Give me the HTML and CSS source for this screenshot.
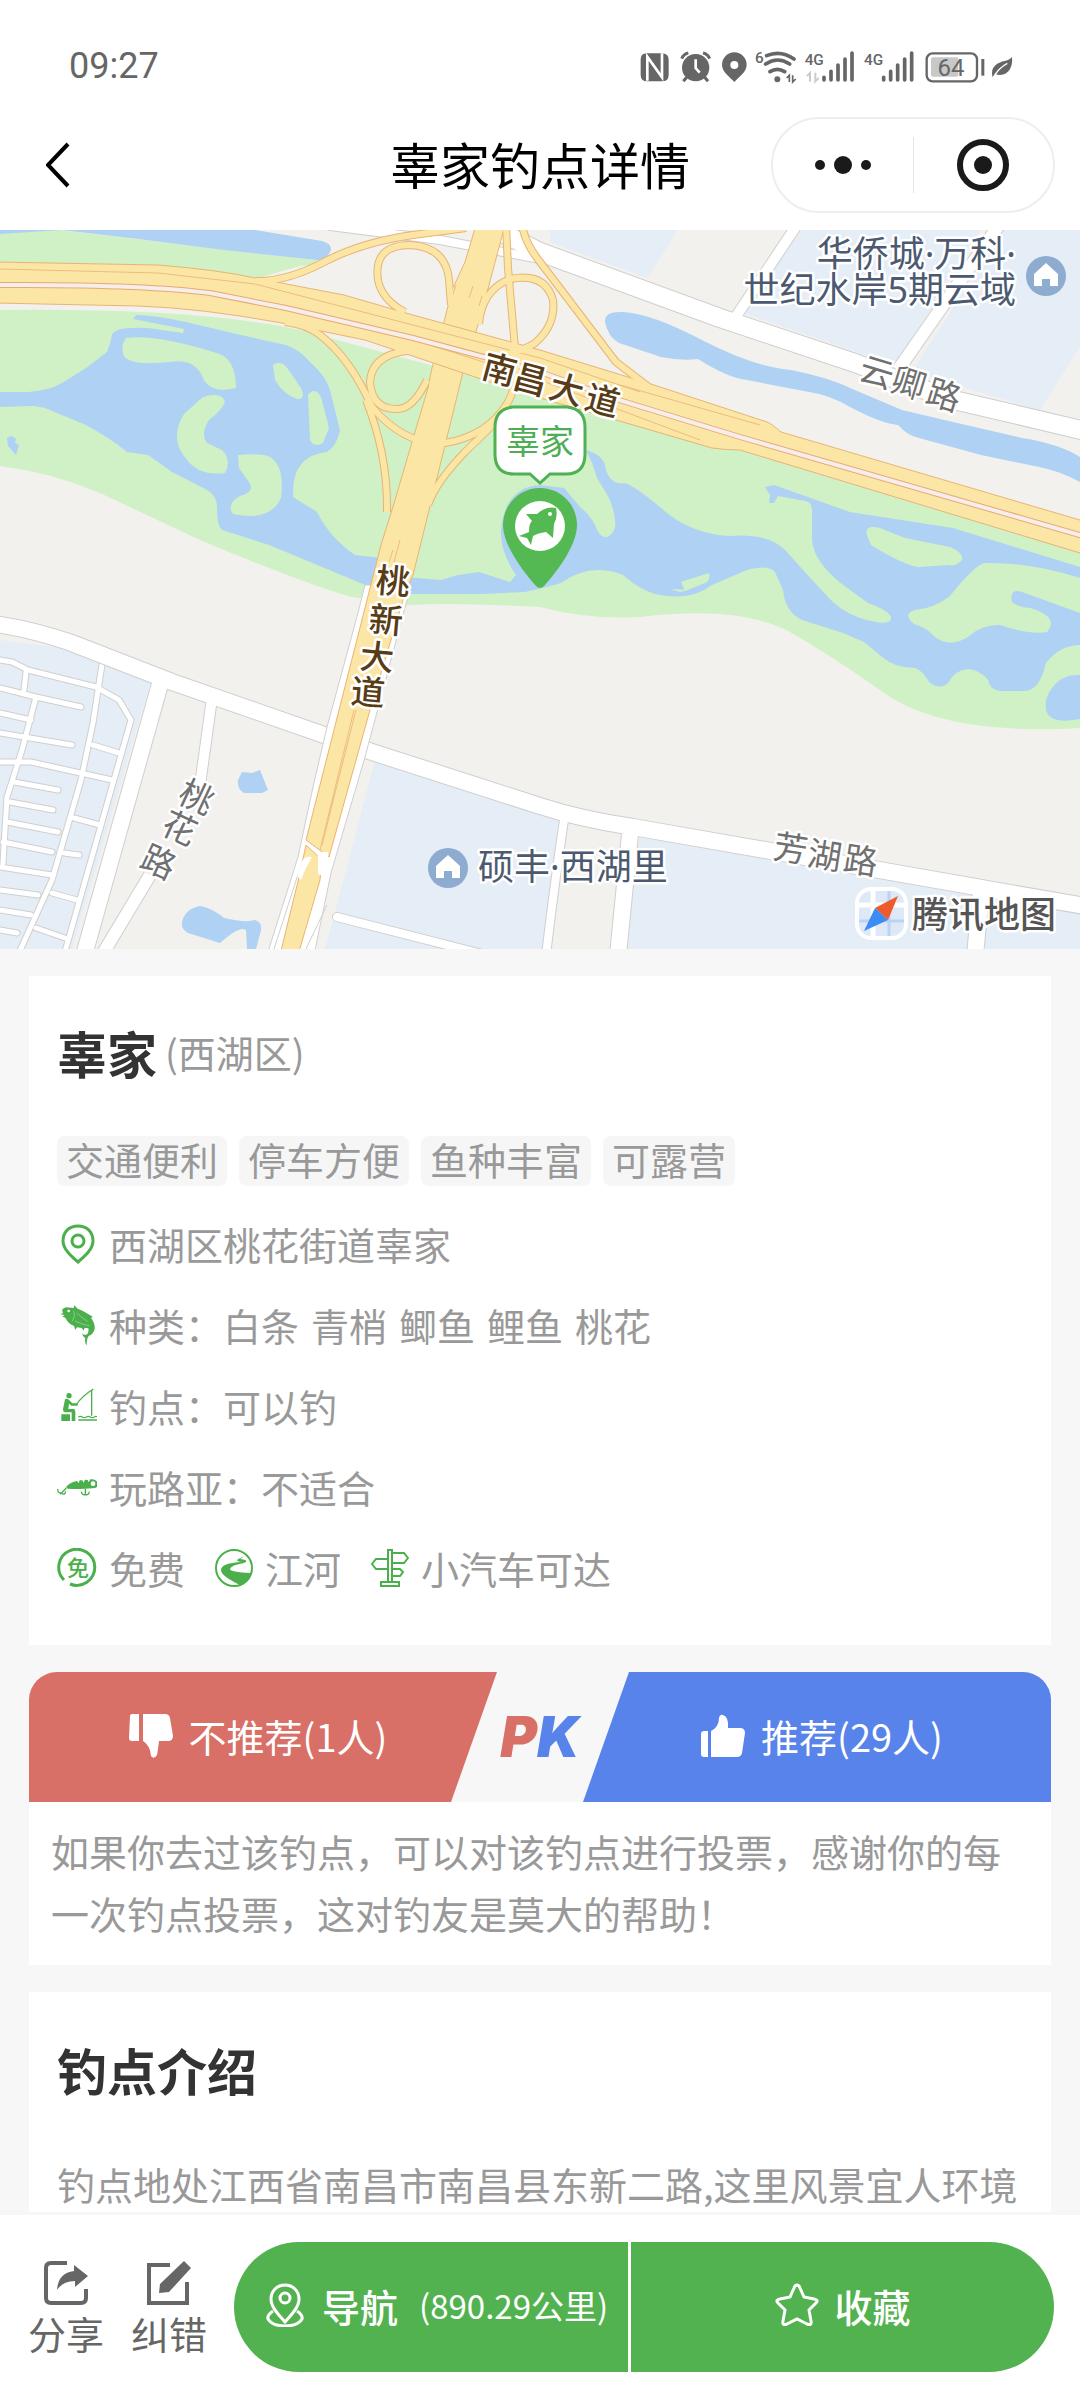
FILE: index.html
```html
<!DOCTYPE html>
<html lang="zh-CN">
<head>
    <meta charset="UTF-8">
    <meta name="viewport" content="width=device-width, initial-scale=1.0">
    <title>辜家钓点详情</title>
    <link rel="stylesheet" href="styles.css">
</head>
<body>
    <header class="header">
        <div class="status-bar">
            <span class="status-time">09:27</span>
            <svg class="status-icons" viewBox="30 50 1128 108" aria-hidden="true">
                <!-- nfc -->
                <path d="M50 66h46q20 0 20 20v44q0 20-20 20H52q-20 0-20-20V84q0-18 18-18z"/>
                <path class="status-cut" d="M52 148V76l44 62V66"/>
                <!-- alarm -->
                <circle cx="197" cy="109" r="41"/>
                <path class="status-line" d="M155 82q6-14 20-17M239 82q-6-14-20-17M170 138l-10 12M224 138l10 12"/>
                <path class="status-cut" d="M197 84v26l12 14"/>
                <!-- location -->
                <path fill-rule="evenodd" d="M313 63a37 37 0 0 1 37 37c0 22-22 35-37 52-15-17-37-30-37-52a37 37 0 0 1 37-37zm0 26a12 12 0 1 0 0 24 12 12 0 0 0 0-24z"/>
                <!-- wifi -->
                <text class="status-small" x="375" y="96">6</text>
                <path class="status-wave" d="M410 73q42-18 82 10M407 98q36-24 72 0M420 121q22-14 44 0"/>
                <circle cx="442" cy="144" r="9"/>
                <path class="status-thin" d="M470 140l8-8v20M488 132v20l9-9"/>
                <!-- signal 1 -->
                <text class="status-small" x="524" y="101">4G</text>
                <path class="status-faint" d="M531 134l9-9v26M556 124v26l10-10"/>
                <path class="status-bars" d="M582 138v8M603 120v26M624 101v45M645 83v63M666 65v81"/>
                <!-- signal 2 -->
                <text class="status-small" x="702" y="101">4G</text>
                <path class="status-bars" d="M761 138v8M782 120v26M803 101v45M824 83v63M845 65v81"/>
                <!-- battery -->
                <rect class="status-level" x="903" y="78" width="82" height="58" rx="6"/>
                <rect class="status-frame" x="890" y="66" width="151" height="84" rx="18"/>
                <text class="status-percent" x="963" y="134">64</text>
                <rect x="1054" y="83" width="9" height="50"/>
                <!-- leaf -->
                <path d="M1146 77c4 32-14 61-48 52l-10 9c-6-22 2-36 20-44 16-7 28-5 38-17z"/>
                <path class="status-vein" d="M1090 138q16-28 42-42"/>
            </svg>
        </div>
        <nav class="nav-bar">
            <button class="back-button" aria-label="返回">
                <svg viewBox="0 0 26 46"><path d="M22 2L2 23l20 21"/></svg>
            </button>
            <h1 class="nav-title">辜家钓点详情</h1>
            <div class="capsule">
                <button class="capsule-button" aria-label="更多">
                    <svg viewBox="0 0 56 56"><circle cx="5" cy="28" r="5"/><circle cx="28" cy="28" r="9"/><circle cx="51" cy="28" r="5"/></svg>
                </button>
                <button class="capsule-button" aria-label="关闭">
                    <svg viewBox="0 0 56 56"><circle class="ring" cx="28" cy="28" r="23"/><circle cx="28" cy="28" r="9"/></svg>
                </button>
            </div>
        </nav>
    </header>

    <main>
        <svg class="map" viewBox="0 230 1080 719" role="img" aria-label="钓点地图">
            <defs>
                <g id="streets">
                    <path d="M0 660L12 662L28 670L96 687L119 700L131 720L64 955"/>
                    <path d="M103 658L93 723L81 780L52 880L18 955"/>
                    <path d="M26 672L24 690M0 688L36 697L81 707M36 697L22 750L7 797L3 863"/>
                    <path d="M0 713L31 720M0 733L72 745M0 762L31 762L112 780"/>
                    <path d="M14 782L58 790M10 802L53 810M7 822L58 832M3 842L52 852M0 867L52 875M0 890L38 895M0 910L31 915M0 930L17 933"/>
                    <path d="M93 745L119 753M74 818L100 825M52 893L77 900M36 928L65 938M64 853L79 855"/>
                </g>
                <g id="roads">
                    <path class="w8" d="M330 226L440 240L540 259"/>
                    <path class="w18" d="M500 232L540 252L720 318L858 364L910 385L958 401L1090 432"/>
                    <path class="w10" d="M797 225L735 318"/>
                    <path class="w12" d="M999 225L898 370"/>
                    <path class="w16" d="M-5 624Q30 629 69 642L172 682L327 736L372 752L540 806Q580 819 633 827L771 851L1090 907"/>
                    <path class="w16" d="M160 684L84 955"/>
                    <path class="w10" d="M212 698L200 785"/>
                    <path class="w12" d="M150 875L102 955"/>
                    <path class="w8" d="M564 820Q555 880 546 955"/>
                    <path class="w16" d="M630 834L618 955"/>
                    <path class="w16" d="M981 893L975 955"/>
                    <path class="w8" d="M337 917L490 956"/>
                </g>
                <g id="ramps">
                    <path d="M255 281Q286 282 324 262T413 235L466 228"/>
                    <path d="M405 312Q382 300 378 280Q373 245 410 245Q446 247 449 280L451 305"/>
                    <path d="M506 225L508 268L515 348Q518 385 508 402Q488 436 445 443Q405 446 372 407Q350 358 320 335Q308 325 285 322"/>
                    <path d="M522 225Q525 242 537 258L578 312L616 362L650 388"/>
                    <path d="M479 324Q482 290 510 279Q545 272 553 300Q556 325 535 343Q525 350 510 352"/>
                    <path d="M422 350Q372 350 370 382Q372 410 398 409Q414 408 427 380"/>
                    <path d="M366 400Q388 455 387 512"/>
                    <path d="M498 420L465 452Q436 482 428 505"/>
                </g>
            </defs>

            <rect class="land" x="0" y="230" width="1080" height="719"/>

            <!-- residential blocks -->
            <path class="block" d="M550 230H678L647 278L550 242Z"/>
            <path class="block" d="M802 230H981L895 365L743 313Z"/>
            <path class="block" d="M1003 230H1080V347L1040 410L912 372Z"/>
            <path class="block" d="M0 640L60 648L151 680L72 949H0Z"/>
            <path class="block" d="M375 760L558 818L545 949H325L337 905Z"/>
            <path class="block" d="M639 834L1080 912V949H627Z"/>

            <!-- park -->
            <path class="park" d="M0 230H60L330 262L300 266L250 280L0 270Z"/>
            <path class="park" d="M0 310Q200 308 300 330L560 400L740 450L1080 552V728Q940 736 880 690Q830 655 790 632Q740 605 640 617Q590 620 540 607Q450 602 408 605L352 597Q310 586 200 540L100 493Q50 472 0 466Z"/>

            <!-- water -->
            <path class="water" d="M0 230H255L322 241Q332 244 331 250L325 261L224 250L138 239L62 230L0 234Z"/>
            <path class="water" d="M605 322Q604 311 623 312Q650 313 702 340T791 370Q830 378 850 388L902 410L953 422L1022 438Q1060 444 1080 457V482Q1060 471 1039 467L981 455L919 438Q908 436 898 425Q880 423 850 407Q830 395 809 392L747 380Q728 378 698 359Q680 361 661 357L619 343Q608 337 605 322Z"/>
            <path class="water" d="M0 392H28Q48 391 62 383L86 368L107 352Q110 345 112 335Q114 326 148 328L183 333L184 329L133 319L136 315Q160 316 186 322L241 335L286 345Q300 350 310 362Q326 376 330 390L340 430Q337 446 327 452Q308 454 300 466Q293 474 293 497L317 512Q330 538 355 555L382 558V592L310 562L269 545L222 530Q217 526 217 510Q218 496 207 490L172 472L148 455L127 452Q110 438 86 425L45 408L34 406L0 407Z"/>
            <path class="water" d="M405 577L441 580L458 575L479 572L510 582L516 575Q500 552 501 530Q505 487 540 485L564 488L581 508Q590 515 595 525Q600 539 607 537Q617 532 615 520Q613 502 603 488L597 478L592 463L586 450Q605 455 606 470Q611 485 624 483Q634 485 661 508Q690 534 730 536Q768 533 785 550L826 595Q840 611 860 618Q892 628 891 617Q888 610 868 603L850 590Q814 565 812 540V510Q812 502 805 501L778 496L774 503L769 503L770 495L765 487L774 485L850 512L953 528L1080 567V645Q1060 645 1046 663Q1040 690 1025 691L1000 691Q990 690 988 680Q980 670 968 669Q955 670 949 682Q940 691 929 682Q922 670 915 668Q895 668 882 657L864 642L843 633L802 620Q785 612 783 590L775 572Q768 564 747 570L712 585Q690 602 655 594Q640 590 623 575Q590 562 561 583L547 587L525 592L482 594L405 594Z"/>
            <path class="water" d="M7 438Q12 434 16 439L15 443L19 445L16 455L8 446ZM238 780L242 772L252 773L260 770L268 790L262 793L244 793Q237 789 238 780ZM182 923Q184 909 200 906Q212 908 224 918Q245 923 255 920Q264 923 260 934L256 949H247L246 930Q240 925 220 943L188 933Q181 929 182 923Z"/>
            <path class="park" d="M126 338Q155 334 213 352Q236 356 236 388Q210 394 203 378Q195 358 170 362Q130 366 124 356Q120 346 126 338ZM203 397Q222 391 225 402Q222 410 209 420Q200 434 207 443L222 450Q232 460 225 473Q200 476 188 461Q168 440 184 414ZM238 455Q262 453 270 457Q285 466 281 498Q270 522 233 514Q226 504 240 496Q256 492 249 482L239 468ZM273 365Q281 359 288 369L301 388Q306 400 297 399Q284 395 275 380ZM308 395Q315 386 321 397L329 428L323 443Q314 448 310 440Z"/>
            <path class="park" d="M867 535Q864 524 880 528L905 538L950 547Q964 553 962 560Q956 567 949 565L919 567Q905 566 871 545ZM984 563Q1030 562 1080 578V613L1022 592Q1009 588 1012 602Q1020 608 1030 608Q1060 617 1047 632Q1030 635 1000 625Q982 624 968 637Q950 648 935 637Q926 627 914 624Q902 614 915 610Q935 608 950 596Q974 566 984 563ZM681 582L709 573Q711 580 705 583L685 591ZM671 589L688 590L680 592Z"/>
            <path class="water" d="M1080 675Q1062 674 1052 688Q1044 698 1046 710Q1050 725 1080 719Z"/>

            <!-- white streets and roads, outline first -->
            <use href="#streets" class="street-edge"/>
            <use href="#streets" class="street"/>
            <use href="#roads" class="road-edge"/>
            <use href="#roads" class="road"/>
            <path class="white-road" d="M365 585L358 613L327 727L313 787L298 857L267 955H314L331 873L365 757L411 585Z"/>
            <path class="hair" d="M302 862L274 949M310 875L288 949M327 905L306 949"/>

            <!-- ramps and the two main roads -->
            <use href="#ramps" class="ramp-edge"/>
            <path class="main-road" d="M476 225L465 262L452 290L444 322L432 368L428 388L392 510L381 545L367 600L306 840L329 857L370 710L406 590L413 575L434 490L463 372L479 322L493 270L505 225Z"/>
            <path class="main-road" d="M300 873L280 955H298L320 880L322 860L306 845Z"/>
            <path class="orange-line" d="M354 710L320 850M356 710L322 845M400 540L394 562M393 550L389 562M456 285L451 300M473 286L469 298M482 296L479 306"/>
            <path class="main-road" d="M-5 262L158 265Q220 270 255 278L344 295L413 315L540 350L654 385L767 422Q772 424 781 432L1090 523V556L740 450Q727 450 712 448L616 420L540 398L475 377L365 340L282 323Q200 308 138 306L-5 303Z"/>
            <path class="orange-line" d="M0 269L158 273L255 284L413 325L540 358L640 392M430 345L540 380L700 440M620 385L760 425"/>
            <path class="gap-edge" d="M-5 285Q140 284 210 293L286 308L413 338L540 372L619 400L740 437L1090 538"/>
            <path class="gap" d="M-5 285Q140 284 210 293L286 308L413 338L540 372L619 400L740 437L1090 538"/>
            <use href="#ramps" class="ramp"/>
            <path class="tunnel" d="M300 866Q303 855 312 857L306 868L301 880L297 876ZM318 852H328L327 878L318 874Z"/>

            <!-- road names -->
            <text class="main-name" x="480 511 547 583" y="377 387 397 408" rotate="15">南昌大道</text>
            <text class="main-name" x="375 368 359 350" y="592 631 668 703" rotate="5">桃新大道</text>
            <text class="road-name" x="176 159 138" y="801 832 866" rotate="25">桃花路</text>
            <text class="road-name" x="857 889 924" y="379 390 402" rotate="17">云卿路</text>
            <text class="road-name" x="772 806 842" y="858 865 870" rotate="9">芳湖路</text>

            <!-- places -->
            <text class="place-name" x="1016" y="267" text-anchor="end">华侨城·万科·</text>
            <text class="place-name" x="1016" y="303" text-anchor="end">世纪水岸5期云域</text>
            <text class="place-name" x="478" y="880">硕丰·西湖里</text>
            <g id="house">
                <circle class="place-dot" cx="1046" cy="276" r="20"/>
                <path class="place-house" d="M1046 263L1058 274V286H1050V279H1042V286H1034V274Z"/>
            </g>
            <use href="#house" x="-598" y="592"/>

            <!-- map provider -->
            <rect class="logo-tile" x="857" y="889" width="49" height="49" rx="14"/>
            <path class="logo-road" d="M873 891V936M859 905H904"/>
            <path class="logo-river" d="M889 891V936M859 921H904"/>
            <path class="logo-north" d="M898 896L875 908L888 920Z"/>
            <path class="logo-south" d="M864 931L875 908L888 920Z"/>
            <text class="logo-name" x="912" y="928">腾讯地图</text>

            <!-- spot marker -->
            <path class="bubble" d="M513 407H567Q585 409 585 427V454Q585 474 566 474H550L540 483L530 474H514Q495 474 495 454V427Q495 409 513 407Z"/>
            <text class="bubble-name" x="540" y="454">辜家</text>
            <path class="pin" d="M540 488C561 488 577 505 577 525C577 546 555 574 544 586Q540 590 536 586C525 574 503 546 503 525C503 505 519 488 540 488Z"/>
            <circle class="pin-hole" cx="540" cy="526" r="25"/>
            <path class="pin" d="M526 514L537 514Q546 506 556 508Q558 517 554 524L553 538L546 532Q538 533 533 536L531 545L527 538L519 536L529 532Q529 523 532 521Z"/>
            <circle class="pin-hole" cx="550" cy="514" r="2"/>
        </svg>

        <section class="card info-card">
            <div class="spot-heading">
                <h2 class="card-title">辜家</h2>
                <span class="district">(西湖区)</span>
            </div>
            <div class="tags">
                <span class="tag">交通便利</span>
                <span class="tag">停车方便</span>
                <span class="tag">鱼种丰富</span>
                <span class="tag">可露营</span>
            </div>
            <ul class="info-list">
                <li class="info-row">
                    <span class="info-item">
                        <svg class="icon icon-line" viewBox="0 0 40 40"><path d="M21 2C12 2 6 8 6 17C6 25 14 32 21 38C28 32 36 25 36 17C36 8 30 2 21 2Z"/><circle cx="21" cy="17" r="6"/></svg>
                        西湖区桃花街道辜家
                    </span>
                </li>
                <li class="info-row">
                    <span class="info-item">
                        <svg class="icon" viewBox="18 22 120 120">
                            <path d="M28 50L36 46L33 38Q36 31 46 29L68 31L70 23L80 33Q94 37 110 48L126 58L120 60Q133 78 131 94Q127 110 113 115Q107 122 107 144Q100 132 103 122Q94 116 93 106Q100 116 110 108Q114 100 112 92Q104 90 100 92L98 99L92 91L78 89L73 97L69 85Q52 79 43 60L34 57L41 52Z"/>
                            <circle class="icon-cut" cx="53" cy="40" r="4"/>
                            <path class="icon-scratch" d="M68 39Q75 56 64 70M76 46L110 72M72 70Q96 82 116 84"/>
                        </svg>
                        <span class="species">
                            <span>种类：白条</span>
                            <span>青梢</span>
                            <span>鲫鱼</span>
                            <span>鲤鱼</span>
                            <span>桃花</span>
                        </span>
                    </span>
                </li>
                <li class="info-row">
                    <span class="info-item">
                        <svg class="icon" viewBox="18 257 120 120">
                            <circle cx="54" cy="286" r="8"/>
                            <path d="M42 297Q50 292 55 300L64 309H80V316H61L54 310L52 326H69Q73 328 73 334V362H62V336H41Q35 334 36 326ZM31 342H57V362H31Z"/>
                            <path class="icon-thin" d="M75 314Q92 288 127 266M122 270V346M82 350Q88 346 94 350T106 350T118 350T130 350T138 350M82 359H138"/>
                        </svg>
                        钓点：可以钓
                    </span>
                </li>
                <li class="info-row">
                    <span class="info-item">
                        <svg class="icon" viewBox="18 501 120 120">
                            <path d="M45 561Q58 546 78 543L83 549L86 541L94 541L98 548L102 539L110 540L113 547L118 538Q138 536 142 553Q140 565 124 565Q85 569 50 566Z"/>
                            <circle class="icon-cut" cx="126" cy="551" r="7"/>
                            <path class="icon-thin" d="M46 564L28 583M20 567Q20 580 29 578M43 574Q44 586 33 581M103 566V585M91 575Q92 586 103 584Q114 586 115 575"/>
                        </svg>
                        玩路亚：不适合
                    </span>
                </li>
                <li class="info-row">
                    <span class="info-item">
                        <svg class="icon icon-line" viewBox="0 0 40 40"><path d="M7 32A18 18 0 1 1 13 36"/><text class="icon-text" x="21" y="28">免</text></svg>
                        免费
                    </span>
                    <span class="info-item">
                        <svg class="icon" viewBox="0 0 40 40"><circle class="icon-ring" cx="21" cy="20" r="18"/><path d="M32 8Q18 13 29 14Q8 15 8 22Q8 28 27 37Q36 33 38 25Q17 24 17 21Q18 17 31 15Q37 12 27 11Z"/></svg>
                        江河
                    </span>
                    <span class="info-item">
                        <svg class="icon icon-sign" viewBox="0 0 40 40"><path d="M19 2H23V34H19ZM23 5H35L39 10L35 15H23M19 11H7L3 16L7 21H19M23 21H31L34 24L31 28H23M12 34H30V38H12Z"/></svg>
                        小汽车可达
                    </span>
                </li>
            </ul>
        </section>

        <section class="vote">
            <div class="vote-bar">
                <button class="vote-button vote-down">
                    <svg class="thumb" viewBox="0 0 44 44"><path d="M1 2Q1 0 3 0H10V27H3Q0 27 0 24ZM14 0H36Q40 0 41 4L44 22Q44 27 39 27H30Q29 36 28 41Q25 46 22 42Q21 31 14 27Z"/></svg>
                    不推荐(1人)
                </button>
                <div class="pk"><span class="pk-p">P</span><span class="pk-k">K</span></div>
                <button class="vote-button vote-up">
                    <svg class="thumb" viewBox="0 0 44 44"><path d="M0 20Q0 17 3 17H7V43H3Q0 43 0 40ZM10 17Q18 13 18 4Q19 0 22 1Q28 3 27 14H39Q44 14 44 19L41 39Q40 43 36 43H10Z"/></svg>
                    推荐(29人)
                </button>
            </div>
            <p class="vote-note">如果你去过该钓点，可以对该钓点进行投票，感谢你的每一次钓点投票，这对钓友是莫大的帮助！</p>
        </section>

        <section class="card intro-card">
            <h2 class="card-title">钓点介绍</h2>
            <p class="intro-text">钓点地处江西省南昌市南昌县东新二路,这里风景宜人环境</p>
        </section>
    </main>

    <footer class="action-bar">
        <button class="tool-button">
            <svg class="tool-icon" viewBox="0 0 44 44"><path class="tool-line" d="M23 2H7Q2 2 2 7V37Q2 42 7 42H37Q42 42 42 37V28"/><path d="M30 4L44 15L31 26V20Q19 20 13 29Q14 12 30 10Z"/></svg>
            分享
        </button>
        <button class="tool-button">
            <svg class="tool-icon" viewBox="0 0 44 44"><path class="tool-line" d="M23 4H2V42H40V21"/><path d="M37 0L44 7L22 31L12 32L13 23Z"/></svg>
            纠错
        </button>
        <div class="pill">
            <button class="pill-button go-button">
                <svg class="pill-icon" viewBox="0 0 44 44"><path d="M22 2C14 2 8 8 8 16C8 24 15 31 22 39C29 31 36 24 36 16C36 8 30 2 22 2Z"/><circle cx="22" cy="15" r="5"/><path d="M10 28Q4 32 5 36Q9 43 22 43Q35 43 39 36Q40 32 34 28"/></svg>
                导航
                <span class="distance">(890.29公里)</span>
            </button>
            <button class="pill-button save-button">
                <svg class="pill-icon" viewBox="0 0 44 44"><path d="M22 2Q24 2 25 5L29 14L39 16Q44 17 41 20L34 27L36 38Q37 43 32 41L22 36L12 41Q7 43 8 38L10 27L3 20Q0 17 5 16L15 14L19 5Q20 2 22 2Z"/></svg>
                收藏
            </button>
        </div>
    </footer>
</body>
</html>
```
FILE: styles.css
```css
* {
    box-sizing: border-box;
}
body {
    margin: 0;
    min-height: 100vh;
    background-color: #f7f7f7;
    color: #999;
    font-family: "Noto Sans CJK SC", "Noto Sans", sans-serif;
    font-size: 38px;
}
button {
    padding: 0;
    border: none;
    background: none;
    color: inherit;
    font: inherit;
    cursor: pointer;
}
h1, h2, p, ul {
    margin: 0;
    padding: 0;
}
svg {
    display: block;
}

/* header */
.header {
    background-color: white;
}
.status-bar {
    display: flex;
    align-items: center;
    justify-content: space-between;
    height: 100px;
    padding: 32px 64px 0 69px;
}
.status-time {
    color: #666;
    font-family: Roboto, sans-serif;
    font-size: 36px;
}
.status-icons {
    width: 376px;
    height: 36px;
    fill: #666;
}
.status-cut, .status-line, .status-wave, .status-thin, .status-faint, .status-bars, .status-frame, .status-vein {
    fill: none;
    stroke: #666;
    stroke-width: 9;
}
.status-cut {
    stroke: white;
    stroke-width: 8;
}
.status-wave {
    stroke-width: 11;
    stroke-linecap: round;
}
.status-thin {
    stroke-width: 5;
}
.status-faint {
    stroke: #ccc;
    stroke-width: 6;
}
.status-bars {
    stroke-width: 11;
    stroke-linecap: round;
}
.status-frame {
    stroke-width: 7;
}
.status-vein {
    stroke: white;
    stroke-width: 4;
}
.status-level {
    fill: #c8c8c8;
}
.status-small {
    font-family: Roboto, sans-serif;
    font-size: 46px;
    font-weight: 500;
}
.status-percent {
    font-family: Roboto, sans-serif;
    font-size: 72px;
    text-anchor: middle;
}
.nav-bar {
    display: grid;
    grid-template-columns: 1fr auto 1fr;
    align-items: center;
    height: 130px;
    padding: 0 25px 0 46px;
}
.back-button svg {
    width: 26px;
    height: 46px;
    fill: none;
    stroke: black;
    stroke-width: 4;
}
.back-button {
    justify-self: start;
}
.nav-title {
    padding-right: 21px;
    padding-bottom: 4px;
    color: black;
    font-size: 50px;
    font-weight: 400;
    line-height: 60px;
}
.capsule {
    display: flex;
    align-items: center;
    justify-self: end;
    width: 284px;
    height: 96px;
    border: 2px solid #eee;
    border-radius: 48px;
}
.capsule-button {
    display: flex;
    flex: 1;
    align-items: center;
    justify-content: center;
    height: 56px;
}
.capsule-button + .capsule-button {
    border-left: 1px solid #e5e5e5;
}
.capsule-button svg {
    width: 56px;
    height: 56px;
    fill: #1a1a1a;
}
.capsule-button .ring {
    fill: none;
    stroke: #1a1a1a;
    stroke-width: 6;
}

/* map */
.map {
    width: 100%;
    height: auto;
}
.land {
    fill: #f2f1ed;
}
.block {
    fill: #e5edf6;
}
.park {
    fill: #d0f1c5;
}
.water {
    fill: #afd2f4;
}
.street, .street-edge, .road, .road-edge, .ramp, .ramp-edge, .gap, .gap-edge, .hair, .orange-line {
    fill: none;
    stroke-linejoin: round;
}
.street {
    stroke: white;
    stroke-width: 5;
    stroke-linecap: round;
}
.street-edge {
    stroke: #cfcfcf;
    stroke-width: 7;
    stroke-linecap: round;
}
.w8 {
    stroke-width: calc(8px + var(--edge));
    stroke-linecap: round;
}
.w10 {
    stroke-width: calc(10px + var(--edge));
}
.w12 {
    stroke-width: calc(12px + var(--edge));
}
.w16 {
    stroke-width: calc(16px + var(--edge));
}
.w18 {
    stroke-width: calc(18px + var(--edge));
}
.road {
    --edge: 0px;
    stroke: white;
}
.road-edge {
    --edge: 2px;
    stroke: #cfcfcf;
}
.white-road {
    fill: white;
    stroke: #cfcfcf;
}
.hair {
    stroke: #cfcfcf;
}
.ramp {
    stroke: #fbe6a6;
    stroke-width: 6;
}
.ramp-edge {
    stroke: #e8b474;
    stroke-width: 8;
}
.main-road {
    fill: #fbe6a6;
    stroke: #e8b474;
}
.orange-line {
    stroke: #ecbd7c;
}
.gap {
    stroke: #f5eeea;
    stroke-width: 4;
}
.gap-edge {
    stroke: #e8a874;
    stroke-width: 6;
}
.tunnel {
    fill: white;
}
.main-name, .road-name, .place-name, .logo-name {
    stroke: white;
    stroke-width: 5;
    stroke-linejoin: round;
    paint-order: stroke;
}
.main-name {
    fill: #583c16;
    font-size: 34px;
    font-weight: 500;
}
.road-name {
    fill: #707070;
    font-size: 34px;
}
.place-name {
    fill: #4b5a70;
    font-family: "Noto Sans", "Noto Sans CJK SC", sans-serif;
    font-size: 36px;
}
.place-dot {
    fill: #8eabd0;
}
.place-house {
    fill: white;
}
.logo-name {
    fill: #555;
    font-size: 36px;
    font-weight: 500;
}
.logo-tile {
    fill: #dfe8f7;
    stroke: white;
    stroke-width: 4;
}
.logo-road {
    stroke: white;
    stroke-width: 5;
}
.logo-river {
    stroke: #b9d3f7;
    stroke-width: 3;
}
.logo-north {
    fill: #ee5a2b;
}
.logo-south {
    fill: #3b8df5;
}
.bubble {
    fill: white;
    stroke: #4fb054;
    stroke-width: 3;
}
.bubble-name {
    fill: #4fae55;
    font-size: 34px;
    text-anchor: middle;
}
.pin {
    fill: #55b953;
}
.pin-hole {
    fill: white;
}

/* cards */
.card {
    margin: 27px 29px 0;
    padding: 0 28px;
    background-color: white;
}
.card-title {
    color: #333;
    font-size: 50px;
    font-weight: 700;
    line-height: 60px;
}
.info-card {
    padding-top: 46px;
    padding-bottom: 37px;
}
.spot-heading {
    display: flex;
    align-items: center;
    gap: 8px;
    margin-bottom: 54px;
}
.district {
    line-height: 60px;
}
.tags {
    display: flex;
    flex-wrap: wrap;
    gap: 12px;
    margin-bottom: 17px;
}
.tag {
    padding: 0 9px 4px;
    border-radius: 8px;
    background-color: #f6f6f6;
    line-height: 46px;
}
.info-list {
    list-style: none;
}
.info-row {
    display: flex;
    align-items: center;
    gap: 28px;
    min-height: 81px;
}
.info-item {
    display: flex;
    align-items: center;
    gap: 12px;
    line-height: 50px;
}
.species {
    display: flex;
    gap: 12px;
}
.icon {
    flex: none;
    width: 40px;
    height: 40px;
    fill: #4bb04b;
}
.icon-line, .icon-ring, .icon-sign {
    fill: none;
    stroke: #4bb04b;
    stroke-width: 3;
}
.icon-ring, .icon-sign {
    stroke-width: 2;
}
.icon-cut {
    fill: white;
}
.icon-scratch {
    fill: none;
    stroke: #a5d8a5;
    stroke-width: 2;
}
.icon-thin {
    fill: none;
    stroke: #4bb04b;
    stroke-width: 4;
}
.icon-text {
    fill: #4bb04b;
    stroke: none;
    font-size: 22px;
    font-weight: 500;
    text-anchor: middle;
}

/* vote */
.vote {
    margin: 27px 29px 0;
}
.vote-bar {
    display: flex;
    height: 130px;
}
.vote-button {
    display: flex;
    flex: 1;
    align-items: center;
    justify-content: center;
    gap: 16px;
    padding-bottom: 3px;
    color: white;
}
.vote-down {
    padding-right: 10px;
    border-top-left-radius: 28px;
    background-color: #d87068;
    clip-path: polygon(0 0, 100% 0, calc(100% - 46px) 100%, 0 100%);
}
.vote-up {
    padding-left: 10px;
    border-top-right-radius: 28px;
    background-color: #5883eb;
    clip-path: polygon(46px 0, 100% 0, 100% 100%, 0 100%);
}
.thumb {
    width: 44px;
    height: 44px;
    fill: white;
}
.pk {
    display: flex;
    align-items: center;
    justify-content: center;
    width: 86px;
    font-family: Inter, Roboto, sans-serif;
    font-size: 56px;
    font-style: italic;
    font-weight: 900;
}
.pk-p {
    color: #d87068;
}
.pk-k {
    color: #5883eb;
}
.vote-note {
    padding: 18px 22px 21px;
    background-color: white;
    line-height: 62px;
}

/* intro */
.intro-card {
    padding-top: 47px;
}
.intro-text {
    padding-top: 57px;
    line-height: 56px;
}

/* bottom bar */
.action-bar {
    position: sticky;
    bottom: 0;
    display: flex;
    align-items: center;
    gap: 27px;
    height: 183px;
    margin-top: 3px;
    padding: 0 26px 0 28px;
    background-color: white;
}
.tool-button {
    display: flex;
    flex-direction: column;
    align-items: center;
    padding-top: 8px;
    color: #666;
    line-height: 56px;
}
.tool-icon {
    width: 44px;
    height: 44px;
    fill: #666;
}
.tool-line {
    fill: none;
    stroke: #666;
    stroke-width: 4;
}
.pill {
    display: flex;
    flex: 1;
    gap: 3px;
    height: 130px;
    border-radius: 65px;
    overflow: hidden;
}
.pill-button {
    display: flex;
    align-items: center;
    justify-content: center;
    gap: 16px;
    padding-bottom: 3px;
    background-color: #53b250;
    color: white;
    font-weight: 500;
}
.go-button {
    gap: 15px;
    padding-right: 20px;
    padding-left: 29px;
}
.save-button {
    flex: 1;
}
.distance {
    padding-left: 6px;
    font-size: 33px;
    font-weight: 400;
}
.pill-icon {
    width: 44px;
    height: 44px;
    fill: none;
    stroke: white;
    stroke-width: 3;
}
```
